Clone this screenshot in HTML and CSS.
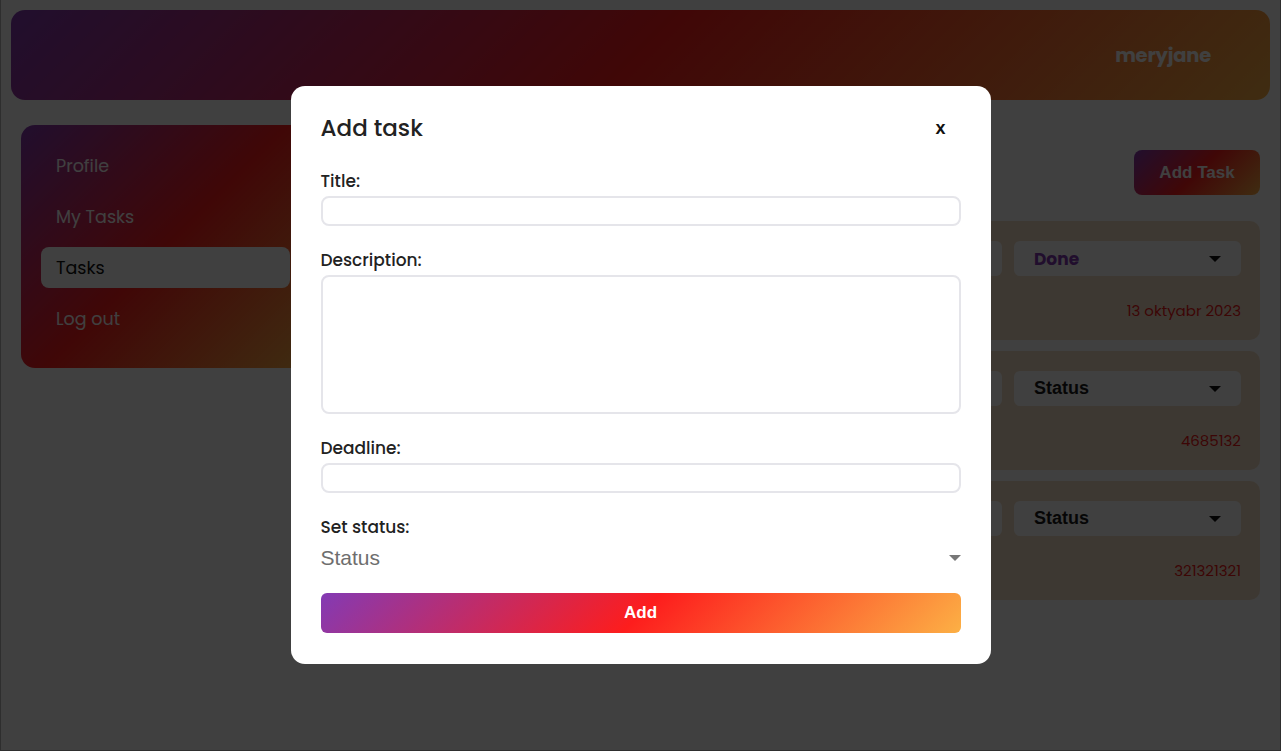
FILE: index.html
```html
<!DOCTYPE html>
<html lang="en">
<head>
<meta charset="utf-8">
<title>Tasks</title>
<link rel="stylesheet" href="styles.css">
</head>
<body>
<div class="app">
  <header class="topbar">
    <span class="username">meryjane</span>
  </header>
  <div class="layout">
    <nav class="sidebar">
      <a class="nav-item">Profile</a>
      <a class="nav-item">My Tasks</a>
      <a class="nav-item active">Tasks</a>
      <a class="nav-item">Log out</a>
    </nav>
    <main class="main">
      <div class="main-head">
        <button class="add-task-btn">Add Task</button>
      </div>
      <div class="cards">
        <div class="card">
          <div class="card-row">
            <div class="card-title"></div>
            <div class="card-box"></div>
            <div class="card-select"><span class="sel-text done">Done</span><span class="caret dark"></span></div>
          </div>
          <div class="card-foot"><span class="card-date">13 oktyabr 2023</span></div>
        </div>
        <div class="card">
          <div class="card-row">
            <div class="card-title"></div>
            <div class="card-box"></div>
            <div class="card-select"><span class="sel-text">Status</span><span class="caret dark"></span></div>
          </div>
          <div class="card-foot"><span class="card-date">4685132</span></div>
        </div>
        <div class="card">
          <div class="card-row">
            <div class="card-title"></div>
            <div class="card-box"></div>
            <div class="card-select"><span class="sel-text">Status</span><span class="caret dark"></span></div>
          </div>
          <div class="card-foot"><span class="card-date">321321321</span></div>
        </div>
      </div>
    </main>
  </div>

  <div class="overlay">
    <div class="modal">
      <div class="modal-head">
        <h1 class="modal-title">Add task</h1>
        <span class="close">x</span>
      </div>
      <label class="field-label">Title:</label>
      <div class="input"></div>
      <label class="field-label">Description:</label>
      <div class="input textarea"></div>
      <label class="field-label">Deadline:</label>
      <div class="input"></div>
      <label class="field-label">Set status:</label>
      <div class="status-select"><span class="status-text">Status</span><span class="caret gray"></span></div>
      <button class="add-btn">Add</button>
    </div>
  </div>
</div>
</body>
</html>
```

FILE: styles.css
```css
* { box-sizing: border-box; }
html, body { margin: 0; padding: 0; }
body {
  font-family: "Poppins", "Open Sans", "Noto Sans", sans-serif;
  background: #ffffff;
  width: 1281px;
  height: 751px;
  overflow: hidden;
}
.app {
  height: 751px;
  border-left: 1px solid #b8b8b8;
  border-right: 1px solid #b8b8b8;
  border-bottom: 1px solid #b8b8b8;
  padding: 10px 10px 0 10px;
  position: relative;
}
.topbar {
  height: 90px;
  border-radius: 14px;
  background: linear-gradient(135deg, #833ab4 0%, #fd1d1d 50%, #fcb045 100%);
  display: flex;
  align-items: center;
  justify-content: flex-end;
  padding-right: 59px;
}
.username {
  color: #ffffff;
  font-weight: 700;
  font-size: 19.5px;
  letter-spacing: -0.2px;
}
.layout {
  display: flex;
  gap: 20px;
  padding: 25px 10px 0 10px;
}
.sidebar {
  width: 289px;
  flex: none;
  height: 243px;
  border-radius: 14px;
  background: linear-gradient(135deg, #833ab4 0%, #fd1d1d 50%, #fcb045 100%);
  padding: 20px;
  display: flex;
  flex-direction: column;
  gap: 10px;
}
.nav-item {
  height: 41px;
  display: flex;
  align-items: center;
  padding-left: 15px;
  color: #ffffff;
  font-size: 17.5px;
  border-radius: 8px;
}
.nav-item.active {
  background: #ffffff;
  color: #111111;
}
.main {
  flex: 1;
  display: flex;
  flex-direction: column;
}
.main-head {
  display: flex;
  align-items: center;
  justify-content: flex-end;
  margin-top: 25px;
  height: 45px;
}
.add-task-btn {
  width: 126px;
  height: 45px;
  border: none;
  border-radius: 8px;
  background: linear-gradient(135deg, #833ab4 0%, #fd1d1d 50%, #fcb045 100%);
  color: #ffffff;
  font-family: "Liberation Sans", Arial, sans-serif;
  font-weight: 700;
  font-size: 17px;
}
.cards {
  margin-top: 26px;
  display: flex;
  flex-direction: column;
  gap: 11px;
}
.card {
  height: 119px;
  border-radius: 10px;
  background: #f4e0c8;
  padding: 20px 19px 20px 20px;
  display: flex;
  flex-direction: column;
  justify-content: space-between;
}
.card-row {
  display: flex;
  gap: 12px;
  height: 35px;
}
.card-title { flex: 1; }
.card-box {
  width: 180px;
  border-radius: 6px;
  background: #ffffff;
}
.card-select {
  width: 227px;
  border-radius: 6px;
  background: #ffffff;
  display: flex;
  align-items: center;
  justify-content: space-between;
  padding: 0 20px 0 20px;
}
.sel-text {
  font-family: "Liberation Sans", Arial, sans-serif;
  font-weight: 700;
  font-size: 18px;
  color: #1a1a1a;
}
.sel-text.done {
  font-family: "Poppins", "Open Sans", sans-serif;
  font-size: 17px;
  color: #833ab4;
}
.caret {
  width: 0;
  height: 0;
  border-left: 6px solid transparent;
  border-right: 6px solid transparent;
  border-top: 6px solid #111;
}
.caret.gray { border-top-color: #777; }
.card-foot {
  display: flex;
  justify-content: flex-end;
  align-items: center;
  height: 20px;
}
.card-date { font-size: 15px; color: #f01818; }

.overlay {
  position: fixed;
  inset: 0;
  background: rgba(0, 0, 0, 0.75);
  display: flex;
  align-items: center;
  justify-content: center;
}
.modal {
  width: 700px;
  background: #ffffff;
  border-radius: 14px;
  padding: 24px 30px 31px 30px;
  display: flex;
  flex-direction: column;
  margin-top: -1px;
}
.modal-head {
  display: flex;
  align-items: center;
  justify-content: space-between;
  height: 36px;
  margin-bottom: 23px;
}
.modal-title {
  margin: 0;
  font-size: 23px;
  font-weight: 500;
  color: #222;
}
.close {
  font-family: "Liberation Sans", Arial, sans-serif;
  font-weight: 700;
  font-size: 18px;
  color: #111;
  margin-right: 15px;
}
.field-label {
  font-size: 17px;
  font-weight: 500;
  color: #222;
  line-height: 24px;
  margin-bottom: 3px;
}
.input {
  height: 30px;
  border: 2px solid #e5e5ea;
  border-radius: 8px;
  margin-bottom: 22px;
}
.input.textarea { height: 139px; }
.status-select {
  height: 31px;
  display: flex;
  align-items: center;
  justify-content: space-between;
}
.status-text {
  font-family: "Liberation Sans", Arial, sans-serif;
  font-size: 21px;
  color: #6e6e6e;
}
.add-btn {
  margin-top: 20px;
  height: 40px;
  border: none;
  border-radius: 6px;
  background: linear-gradient(135deg, #833ab4 0%, #fd1d1d 50%, #fcb045 100%);
  color: #ffffff;
  font-family: "Liberation Sans", Arial, sans-serif;
  font-weight: 700;
  font-size: 17px;
}
```
